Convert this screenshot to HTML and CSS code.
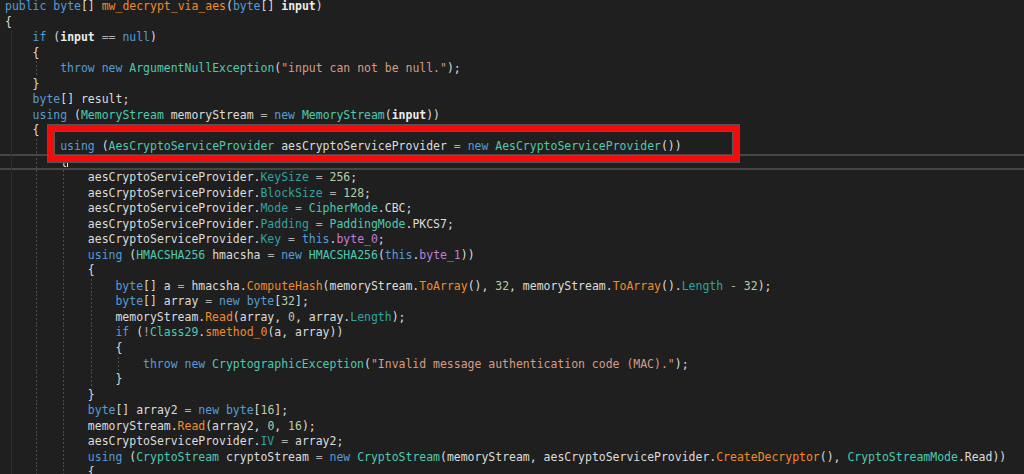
FILE: index.html
```html
<!DOCTYPE html>
<html>
<head>
    <title>mw_decrypt_via_aes</title>
    <link rel="stylesheet" href="styles.css">
</head>
<body>
    <div class="editor">
        <div class="ln"><span class="k">public</span> <span class="k">byte</span>[] <span class="m">mw_decrypt_via_aes</span>(<span class="k">byte</span>[] <span class="a">input</span>)</div>
        <div class="ln">{</div>
        <div class="ln"><i class="g g0"></i><span class="k">if</span> (<span class="a">input</span> <span class="o">==</span> <span class="k">null</span>)</div>
        <div class="ln"><i class="g g0"></i>{</div>
        <div class="ln"><i class="g g0"></i><i class="g"></i><span class="k">throw</span> <span class="k">new</span> <span class="t">ArgumentNullException</span>(<span class="s">"input can not be null."</span>);</div>
        <div class="ln"><i class="g g0"></i>}</div>
        <div class="ln"><i class="g g0"></i><span class="k">byte</span>[] result;</div>
        <div class="ln"><i class="g g0"></i><span class="k">using</span> (<span class="t">MemoryStream</span> memoryStream <span class="o">=</span> <span class="k">new</span> <span class="t">MemoryStream</span>(<span class="a">input</span>))</div>
        <div class="ln"><i class="g g0"></i>{</div>
        <div class="ln"><i class="g g0"></i><i class="g"></i><span class="k">using</span> (<span class="t">AesCryptoServiceProvider</span> aesCryptoServiceProvider <span class="o">=</span> <span class="k">new</span> <span class="t">AesCryptoServiceProvider</span>())</div>
        <div class="ln cur"><i class="g g0"></i><i class="g"></i>{<i class="caret"></i></div>
        <div class="ln"><i class="g g0"></i><i class="g"></i><i class="g"></i>aesCryptoServiceProvider.<span class="p">KeySize</span> <span class="o">=</span> <span class="n">256</span>;</div>
        <div class="ln"><i class="g g0"></i><i class="g"></i><i class="g"></i>aesCryptoServiceProvider.<span class="p">BlockSize</span> <span class="o">=</span> <span class="n">128</span>;</div>
        <div class="ln"><i class="g g0"></i><i class="g"></i><i class="g"></i>aesCryptoServiceProvider.<span class="p">Mode</span> <span class="o">=</span> <span class="t">CipherMode</span>.<span class="e">CBC</span>;</div>
        <div class="ln"><i class="g g0"></i><i class="g"></i><i class="g"></i>aesCryptoServiceProvider.<span class="p">Padding</span> <span class="o">=</span> <span class="t">PaddingMode</span>.<span class="e">PKCS7</span>;</div>
        <div class="ln"><i class="g g0"></i><i class="g"></i><i class="g"></i>aesCryptoServiceProvider.<span class="p">Key</span> <span class="o">=</span> <span class="k">this</span>.<span class="f">byte_0</span>;</div>
        <div class="ln"><i class="g g0"></i><i class="g"></i><i class="g"></i><span class="k">using</span> (<span class="t">HMACSHA256</span> hmacsha <span class="o">=</span> <span class="k">new</span> <span class="t">HMACSHA256</span>(<span class="k">this</span>.<span class="f">byte_1</span>))</div>
        <div class="ln"><i class="g g0"></i><i class="g"></i><i class="g"></i>{</div>
        <div class="ln"><i class="g g0"></i><i class="g"></i><i class="g"></i><i class="g"></i><span class="k">byte</span>[] a <span class="o">=</span> hmacsha.<span class="m">ComputeHash</span>(memoryStream.<span class="m">ToArray</span>(), <span class="n">32</span>, memoryStream.<span class="m">ToArray</span>().<span class="p">Length</span> <span class="o">-</span> <span class="n">32</span>);</div>
        <div class="ln"><i class="g g0"></i><i class="g"></i><i class="g"></i><i class="g"></i><span class="k">byte</span>[] array <span class="o">=</span> <span class="k">new</span> <span class="k">byte</span>[<span class="n">32</span>];</div>
        <div class="ln"><i class="g g0"></i><i class="g"></i><i class="g"></i><i class="g"></i>memoryStream.<span class="m">Read</span>(array, <span class="n">0</span>, array.<span class="p">Length</span>);</div>
        <div class="ln"><i class="g g0"></i><i class="g"></i><i class="g"></i><i class="g"></i><span class="k">if</span> (<span class="o">!</span><span class="t">Class29</span>.<span class="m">smethod_0</span>(a, array))</div>
        <div class="ln"><i class="g g0"></i><i class="g"></i><i class="g"></i><i class="g"></i>{</div>
        <div class="ln"><i class="g g0"></i><i class="g"></i><i class="g"></i><i class="g"></i><i class="g"></i><span class="k">throw</span> <span class="k">new</span> <span class="t">CryptographicException</span>(<span class="s">"Invalid message authentication code (MAC)."</span>);</div>
        <div class="ln"><i class="g g0"></i><i class="g"></i><i class="g"></i><i class="g"></i>}</div>
        <div class="ln"><i class="g g0"></i><i class="g"></i><i class="g"></i>}</div>
        <div class="ln"><i class="g g0"></i><i class="g"></i><i class="g"></i><span class="k">byte</span>[] array2 <span class="o">=</span> <span class="k">new</span> <span class="k">byte</span>[<span class="n">16</span>];</div>
        <div class="ln"><i class="g g0"></i><i class="g"></i><i class="g"></i>memoryStream.<span class="m">Read</span>(array2, <span class="n">0</span>, <span class="n">16</span>);</div>
        <div class="ln"><i class="g g0"></i><i class="g"></i><i class="g"></i>aesCryptoServiceProvider.<span class="p">IV</span> <span class="o">=</span> array2;</div>
        <div class="ln"><i class="g g0"></i><i class="g"></i><i class="g"></i><span class="k">using</span> (<span class="t">CryptoStream</span> cryptoStream <span class="o">=</span> <span class="k">new</span> <span class="t">CryptoStream</span>(memoryStream, aesCryptoServiceProvider.<span class="m">CreateDecryptor</span>(), <span class="t">CryptoStreamMode</span>.<span class="e">Read</span>))</div>
        <div class="ln"><i class="g g0"></i><i class="g"></i><i class="g"></i>{</div>

        <div class="mark"></div>
    </div>
</body>
</html>
```

FILE: styles.css
```css
html, body { margin: 0; height: 100%; background: #1f1f1f; overflow: hidden; }
.editor { position: relative; margin-top: -1px; font-family: "DejaVu Sans Mono", "Liberation Mono", monospace; font-size: 11.47px; color: #dcdcdc; }
.ln { height: 15.55px; line-height: 15.55px; white-space: pre; padding-left: 5px; }
.ln.cur { box-shadow: inset 0 2px 0 #464646, inset 0 -2px 0 #464646; }

.g { display: inline-block; width: 4ch; height: 15.55px; vertical-align: top; background: repeating-linear-gradient(to bottom, #4e4e4e 0 2px, transparent 2px 4px) 3px 0 / 1px 100% no-repeat; }
.g0 { background: linear-gradient(#2c2c2c, #2c2c2c) 6px 0 / 1px 100% no-repeat; }
.caret { display: inline-block; width: 1px; height: 12px; vertical-align: -2px; background: #e8e8e8; }

.k { color: #569cd6; }
.t { color: #4ec9b0; }
.m { color: #f08b2c; }
.p { color: #2fa3a0; }
.f { color: #c07ed8; }
.s { color: #d69d85; }
.n { color: #b5cea8; }
.a { color: #ececec; font-weight: bold; }
.o { color: #b0b0b0; }
.e { color: #dcdcdc; }

/* red annotation box drawn over the code */
.mark { position: absolute; left: 48px; top: 126px; width: 691px; height: 37px; box-sizing: border-box; border: 6px solid #f40b0b; box-shadow: 0 0 0 1px #555, inset 0 0 0 1px #5a5a5a; }
```
